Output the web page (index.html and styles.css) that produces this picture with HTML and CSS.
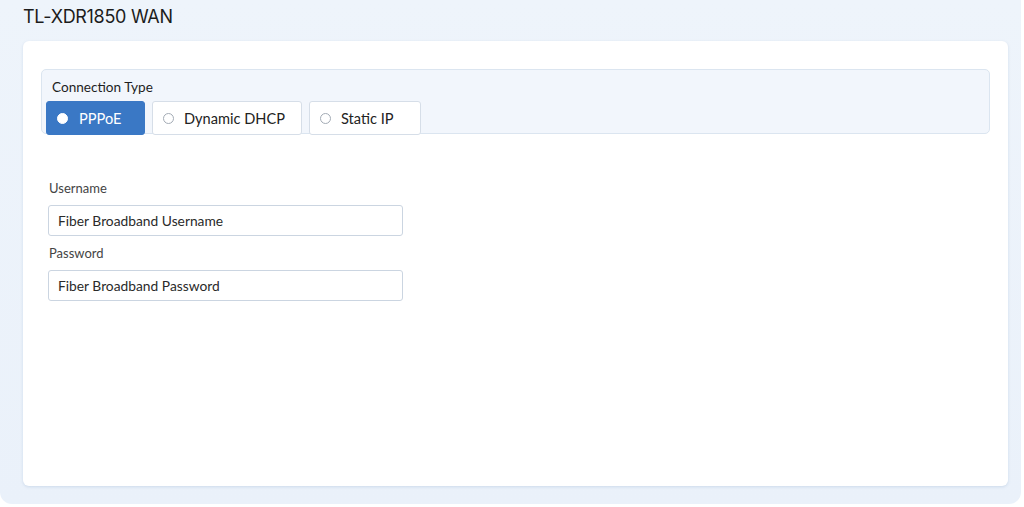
FILE: index.html
```html
<!DOCTYPE html>
<html>
<head>
<meta charset="utf-8">
<link rel="stylesheet" href="styles.css">
</head>
<body>
<div class="frame">
  <h1 class="title">TL-XDR1850 WAN</h1>
  <div class="card">
    <div class="conn">
      <div class="conn-label">Connection Type</div>
      <div class="options">
        <div class="opt active"><span class="radio"></span>PPPoE</div>
        <div class="opt opt-dhcp"><span class="radio"></span>Dynamic DHCP</div>
        <div class="opt opt-static"><span class="radio"></span>Static IP</div>
      </div>
    </div>
    <div class="form">
      <label class="field-label">Username</label>
      <div class="input">Fiber Broadband Username</div>
      <label class="field-label">Password</label>
      <div class="input">Fiber Broadband Password</div>
    </div>
  </div>
</div>
</body>
</html>
```

FILE: styles.css
```css
html, body {
  margin: 0;
  padding: 0;
  background: #ffffff;
}
body {
  font-family: "Lato", "Noto Sans", sans-serif;
  color: #222;
}
.frame {
  width: 1021px;
  height: 504px;
  box-sizing: border-box;
  background: linear-gradient(180deg, #eef4fb 0%, #eaf1fa 100%);
  border-radius: 0 0 12px 12px;
  padding: 5px 13px 0 23px;
}
.title {
  margin: 0;
  font-family: "Inter", "Lato", sans-serif;
  font-weight: 400;
  font-size: 18px;
  line-height: 24px;
  color: #1c1c1c;
  letter-spacing: -0.3px;
}
.card {
  margin-top: 12px;
  height: 445px;
  box-sizing: border-box;
  background: #fff;
  border-radius: 6px;
  box-shadow: 0 1px 3px rgba(120, 150, 190, 0.25);
  padding: 28px 18px 0 18px;
}
.conn {
  background: #f2f6fc;
  border: 1px solid #dbe5f0;
  border-radius: 5px;
  padding: 8px 0 0 4px;
  height: 65px;
  box-sizing: border-box;
}
.conn-label {
  font-size: 13.6px;
  line-height: 18px;
  padding-left: 6px;
  color: #1e1e1e;
  margin-bottom: 5px;
}
.options {
  display: flex;
  gap: 7px;
}
.opt {
  display: flex;
  align-items: center;
  height: 34px;
  box-sizing: border-box;
  border: 1px solid #d6dee8;
  border-radius: 3px;
  background: #fff;
  font-size: 14.6px;
  color: #222;
  padding-left: 10px;
}
.opt .radio {
  width: 11px;
  height: 11px;
  border: 1px solid #a3abb5;
  border-radius: 50%;
  box-sizing: border-box;
  margin-right: 10px;
  background: #fff;
}
.opt.active {
  width: 99px;
  background: #3a78c5;
  border-color: #3a78c5;
  color: #fff;
}
.opt.active .radio {
  border-color: #fff;
  margin-right: 11px;
}
.opt-dhcp { width: 150px; }
.opt-static { width: 112px; }
.form {
  margin-top: 46px;
  padding-left: 7px;
  width: 355px;
}
.field-label {
  display: block;
  font-size: 13px;
  line-height: 16px;
  color: #444;
  padding-left: 1px;
  margin-bottom: 9px;
}
.input {
  height: 31px;
  box-sizing: border-box;
  border: 1px solid #cbd5e1;
  border-radius: 3px;
  font-size: 13.8px;
  line-height: 29px;
  padding-left: 9px;
  color: #2a2a2a;
  margin-bottom: 9px;
}
```
